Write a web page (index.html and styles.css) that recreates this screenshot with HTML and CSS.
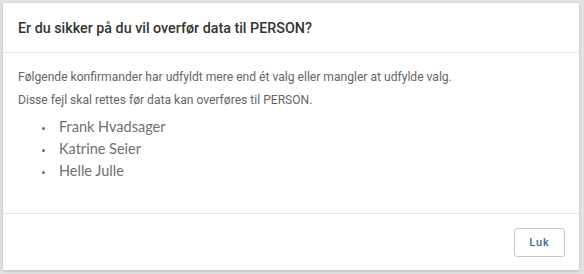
FILE: index.html
```html
<!DOCTYPE html>
<html lang="da">
<head>
<meta charset="utf-8">
<title>Bekræft overførsel</title>
<link rel="stylesheet" href="styles.css">
</head>
<body>
<div class="backdrop">
  <div class="modal">
    <div class="modal-header">
      <h4 class="modal-title">Er du sikker på du vil overfør data til PERSON?</h4>
    </div>
    <div class="modal-body">
      <p class="msg">Følgende konfirmander har udfyldt mere end ét valg eller mangler at udfylde valg.</p>
      <p class="msg">Disse fejl skal rettes før data kan overføres til PERSON.</p>
      <ul class="names">
        <li>Frank Hvadsager</li>
        <li>Katrine Seier</li>
        <li>Helle Julle</li>
      </ul>
    </div>
    <div class="modal-footer">
      <button class="btn">Luk</button>
    </div>
  </div>
</div>
</body>
</html>
```

FILE: styles.css
```css
html, body {
  margin: 0;
  padding: 0;
  height: 100%;
}
body {
  background: #e2e2e2;
  font-family: Roboto, "Liberation Sans", sans-serif;
  overflow: hidden;
}
.backdrop {
  padding: 3px 5px 4px 3px;
}
.modal {
  background: #fff;
  height: 267px;
  display: flex;
  flex-direction: column;
  box-shadow: 0 1px 3px rgba(0,0,0,0.18);
}
.modal-header {
  padding: 15px 15px 14px 15px;
  border-bottom: 1px solid #e6e6e6;
}
.modal-title {
  margin: 0;
  font-size: 14.3px;
  line-height: 20px;
  font-weight: 500;
  color: #333;
}
.modal-body {
  flex: 1;
  padding: 13px 15px 0 15px;
}
.msg {
  margin: 0;
  font-size: 12.1px;
  line-height: 23px;
  color: #666;
}
.names {
  list-style: none;
  margin: 4px 0 0 0;
  padding: 0 0 0 41px;
}
.names li {
  position: relative;
  font-family: Lato, "Open Sans", sans-serif;
  font-size: 14.5px;
  line-height: 22px;
  color: #707070;
}
.names li::before {
  content: "";
  position: absolute;
  left: -17px;
  top: 11px;
  width: 3px;
  height: 3px;
  border-radius: 50%;
  background: #6a6a6a;
}
.modal-footer {
  border-top: 1px solid #e6e6e6;
  padding: 14px 14px 13px 14px;
  display: flex;
  justify-content: flex-end;
}
.btn {
  width: 51px;
  height: 29px;
  background: #fff;
  border: 1px solid #c8c8c8;
  border-radius: 3px;
  color: #3d6a8e;
  font-family: Roboto, "Liberation Sans", sans-serif;
  font-size: 11px;
  font-weight: 500;
  letter-spacing: 1px;
  padding: 0;
}
```
